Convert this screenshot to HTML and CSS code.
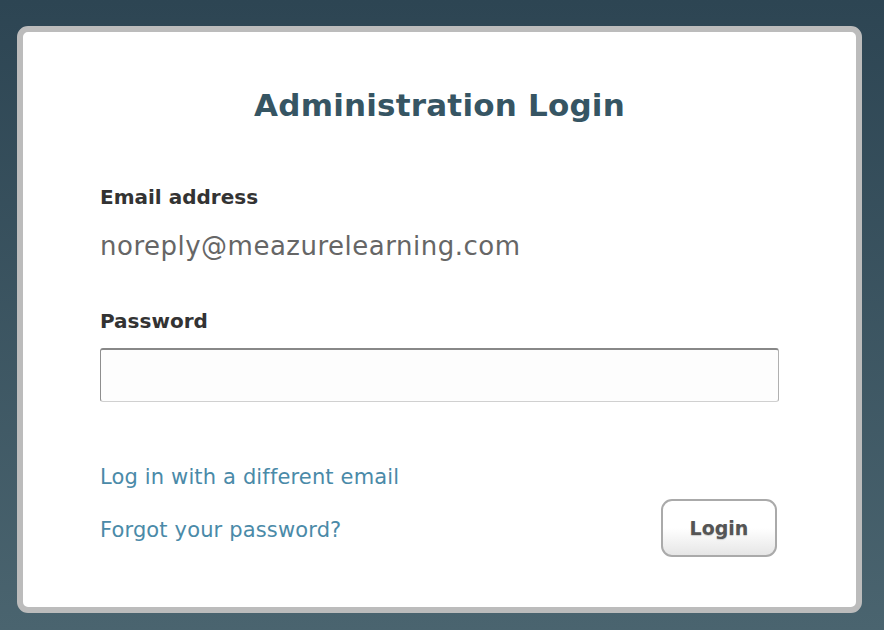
FILE: index.html
```html
<!DOCTYPE html>
<html lang="en">
<head>
    <meta charset="UTF-8">
    <meta name="viewport" content="width=device-width, initial-scale=1.0">
    <title>Administration Login</title>
    <link rel="stylesheet" href="styles.css">
</head>
<body>
    <div class="login-box">
        <h1>Administration Login</h1>
        <form id="loginForm">
            <label class="field-label">Email address</label>
            <div class="email-value">noreply@meazurelearning.com</div>
            <label class="field-label" for="password">Password</label>
            <input type="password" id="password" name="password">
            <div class="bottom-row">
                <div class="links">
                    <a href="#">Log in with a different email</a>
                    <a href="#">Forgot your password?</a>
                </div>
                <button type="submit" class="login-btn">Login</button>
            </div>
        </form>
    </div>
</body>
</html>
```

FILE: styles.css
```css
html {
    height: 100%;
}
body {
    font-family: "DejaVu Sans", Verdana, sans-serif;
    margin: 0;
    padding: 26px 22px 17px 17px;
    min-height: 100%;
    box-sizing: border-box;
    background: linear-gradient(to bottom, #2d4553, #4a646f);
}
.login-box {
    background-color: #fff;
    border: 6px solid #bcbcbc;
    border-radius: 11px;
    height: 587px;
    box-sizing: border-box;
    padding: 55px 77px 0 77px;
}
h1 {
    margin: 0 0 62px 0;
    text-align: center;
    font-size: 31px;
    line-height: 36px;
    color: #365563;
    letter-spacing: 0.2px;
}
.field-label {
    display: block;
    font-size: 20px;
    line-height: 24px;
    font-weight: bold;
    color: #333;
}
.email-value {
    font-size: 26px;
    line-height: 30px;
    letter-spacing: 0.5px;
    color: #666;
    margin: 22px 0 48px 0;
}
input[type="password"] {
    display: block;
    width: 100%;
    height: 54px;
    box-sizing: border-box;
    margin-top: 15px;
    border: 1px solid #b0b0b0;
    border-top: 2px solid #888;
    border-left-color: #8e8e8e;
    border-bottom-color: #d0d0d0;
    border-radius: 3px;
    background-color: #fdfdfd;
}
.bottom-row {
    display: flex;
    justify-content: space-between;
    align-items: flex-end;
    margin-top: 63px;
}
.links {
    display: flex;
    flex-direction: column;
    gap: 29px;
}
.links a {
    color: #4a8aa8;
    text-decoration: none;
    font-size: 21px;
    line-height: 24px;
    letter-spacing: 0.15px;
}
.login-btn {
    width: 116px;
    height: 58px;
    margin-right: 2px;
    margin-bottom: -15px;
    border: 2px solid #aaa;
    border-radius: 11px;
    background: linear-gradient(to bottom, #fff 50%, #e6e6e6);
    font-family: inherit;
    font-size: 19px;
    font-weight: bold;
    color: #555;
    text-shadow: 0 1px 1px #ccc;
    cursor: pointer;
}
```
